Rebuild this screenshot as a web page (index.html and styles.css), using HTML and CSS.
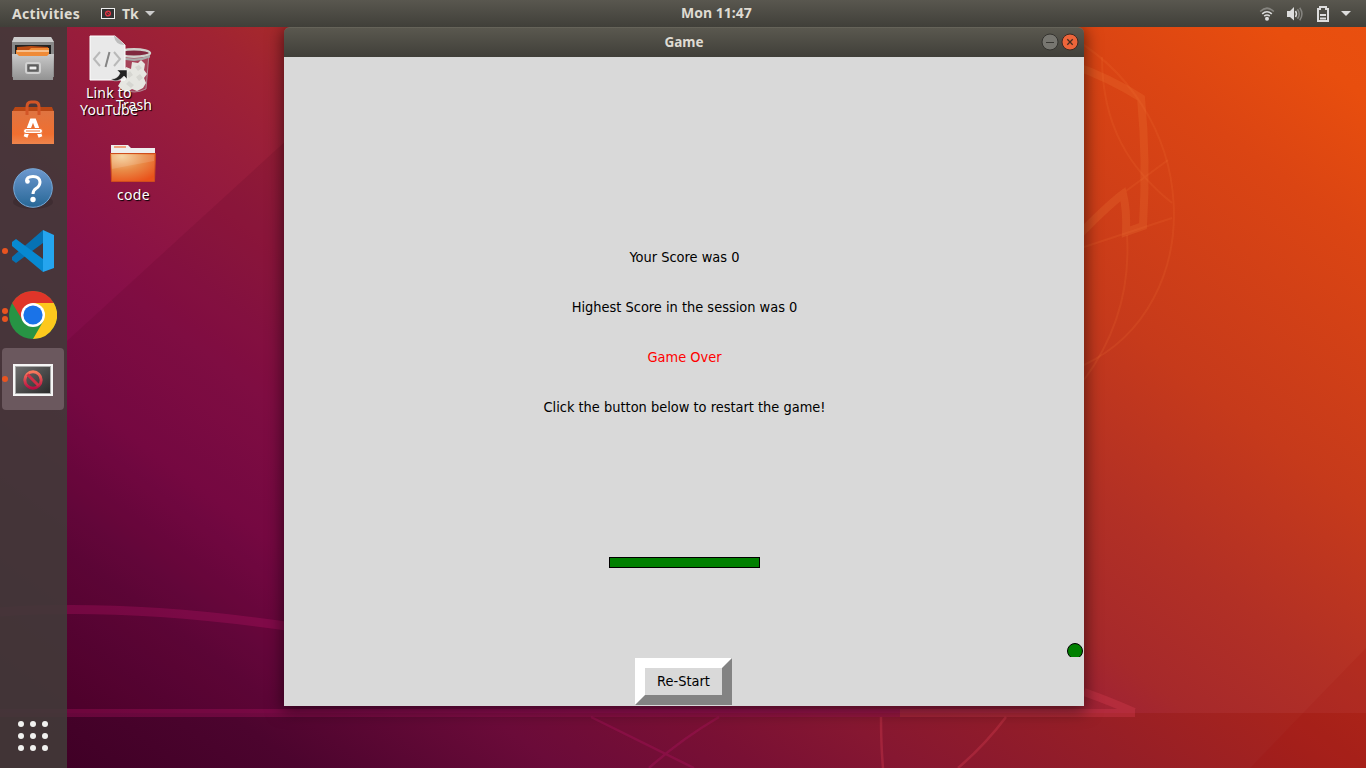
FILE: index.html
```html
<!DOCTYPE html>
<html lang="en">
<head>
<meta charset="utf-8">
<title>Game</title>
<link rel="stylesheet" href="styles.css">
</head>
<body>
<div class="screen">
  <svg class="wallpaper" viewBox="0 0 1366 768" aria-hidden="true">
    <defs>
      <linearGradient id="sky" gradientUnits="userSpaceOnUse" x1="-344" y1="459" x2="492" y2="-656">
        <stop offset="0" stop-color="#480029"/>
        <stop offset=".126" stop-color="#5f063a"/>
        <stop offset=".217" stop-color="#7b0a47"/>
        <stop offset=".298" stop-color="#870f48"/>
        <stop offset=".425" stop-color="#981d3b"/>
        <stop offset=".481" stop-color="#a02333"/>
        <stop offset=".515" stop-color="#a6292b"/>
        <stop offset=".598" stop-color="#b23025"/>
        <stop offset=".707" stop-color="#c63a1b"/>
        <stop offset=".862" stop-color="#db4513"/>
        <stop offset=".943" stop-color="#e84e0e"/>
        <stop offset="1" stop-color="#e95010"/>
      </linearGradient>
      <linearGradient id="floor" gradientUnits="userSpaceOnUse" x1="-344" y1="459" x2="492" y2="-656">
        <stop offset="0" stop-color="#400026"/>
        <stop offset=".1" stop-color="#4c042e"/>
        <stop offset=".212" stop-color="#6b0b39"/>
        <stop offset=".296" stop-color="#791034"/>
        <stop offset=".362" stop-color="#861731"/>
        <stop offset=".458" stop-color="#951e27"/>
        <stop offset=".559" stop-color="#a8241c"/>
        <stop offset=".6" stop-color="#ae281b"/>
      </linearGradient>
    </defs>
    <rect width="1366" height="768" fill="url(#sky)"/>
    <path d="M67 341L300 128V713H67z" fill="#500020" opacity=".13"/>
    <path d="M0 713H1366V768H0z" fill="url(#floor)"/>
    <path d="M1366 648V768H1250z" fill="#a00000" opacity=".1"/>
    <g fill="none" stroke="#b81468" stroke-opacity=".3">
      <path d="M0 612Q130 603 300 628" stroke-width="9"/>
      <path d="M0 713H900" stroke-width="8"/>
      <path d="M591 717L694 768M719 717Q680 740 649 768" stroke-width="2.5"/>
    </g>
    <g fill="none" stroke="#d83c50" stroke-opacity=".35">
      <path d="M900 713H1135M1084 692Q1112 702 1134 712" stroke-width="8"/>
      <path d="M881 717Q881 745 883 768M1006 717Q985 745 958 768" stroke-width="2.5"/>
    </g>
    <g fill="none" stroke="#f07838" stroke-opacity=".24">
      <path d="M1070 64Q1110 78 1141 98Q1147 160 1143 226L1126 232Q1127 210 1123 194Q1106 207 1075 239" stroke-width="8"/>
    </g>
    <g fill="none" stroke="#f07838" stroke-opacity=".16" stroke-width="2">
      <path d="M1060 31C1205 105 1210 305 1084 365"/>
      <path d="M1102 57C1102 126 1130 169 1172 203M1084 247L1172 218M1126 191L1168 160M1127 235Q1132 315 1084 380"/>
    </g>
  </svg>

  <header class="topbar">
    <div class="menu">
      <span class="activities">Activities</span>
      <svg class="app-icon" viewBox="0 0 14 11"><rect x=".5" y=".5" width="13" height="10" fill="#333" stroke="#eee"/><circle cx="7" cy="5.5" r="2.4" fill="none" stroke="#e73545" stroke-width="1.3"/><path d="M5.6 4l3 3" stroke="#e73545"/></svg>
      <span class="app-name">Tk</span>
      <svg class="arrow" viewBox="0 0 10 5"><path d="M0 0h10L5 5z" fill="#ccc"/></svg>
    </div>
    <div class="clock">Mon 11:47</div>
    <div class="tray">
      <svg class="wifi" width="16" height="14" viewBox="0 0 16 14" fill="none"><path d="M1.200 4.500Q8-2 14.800 4.500" stroke="#85847f" stroke-width="1.700"/><path d="M3.200 6.900Q8 2.600 12.800 6.900M5.200 9.200Q8 6.800 10.800 9.200" stroke="#ddd" stroke-width="1.600"/><circle cx="8" cy="11.800" r="2" fill="#ddd"/></svg>
      <svg class="volume" width="16" height="14" viewBox="0 0 16 14" fill="none"><path d="M0 4h3l4-4v13.500L3 10H0z" fill="#ddd"/><path d="M8.500 4q2 3 0 6" stroke="#ddd" stroke-width="1.500"/><path d="M10.500 2.200q3.500 4.800 0 9.600M12.700.8q4.500 6.200 0 12.400" stroke="#85847f" stroke-width="1.500"/></svg>
      <svg width="12" height="16" viewBox="0 0 12 16"><path d="M3 1h6v2h2v12H1V3h2z" fill="none" stroke="#ddd" stroke-width="2"/><path d="M3 8h6v2H3zM3 11.500h6v2H3z" fill="#ddd"/></svg>
      <svg width="10" height="5" viewBox="0 0 10 5"><path d="M0 0h10L5 5z" fill="#ddd"/></svg>
    </div>
  </header>

  <div class="workspace">
    <nav class="dock">
      <div class="tile">
        <svg width="44" height="46" viewBox="0 0 44 46">
          <defs><linearGradient id="metal" x2="0" y2="1"><stop stop-color="#c9c9c9"/><stop offset="1" stop-color="#929292"/></linearGradient></defs>
          <path d="M3 1h37l3 5v35H1V6z" fill="#888"/><path d="M3 1h37l3 5H1z" fill="#ccc"/><path d="M4 9h36v12H4z" fill="#222"/><path d="M6 11l14-1 17 1v8H6z" fill="#b94b13"/><path d="M5 14h13l2-2h18v8H5z" fill="#ef8a36"/><path d="M6 15h32" stroke="#fff2df"/><path d="M1 18h5l2 2h28l2-2h5l-1 26H2z" fill="url(#metal)"/><rect x="15" y="27" width="14" height="10" rx="2" fill="#777" stroke="#d1d1d1" stroke-width="2"/><rect x="18" y="30" width="8" height="4" fill="#eee" stroke="#444"/>
        </svg>
      </div>
      <div class="tile">
        <svg width="44" height="46" viewBox="0 0 44 46">
          <defs><linearGradient id="bag" x2="0" y2="1"><stop stop-color="#df7441"/><stop offset=".7" stop-color="#f06f30"/><stop offset="1" stop-color="#ee854d"/></linearGradient></defs>
          <path d="M4 7h37l2 5H1z" fill="#b94714"/><path d="M1 11h42v33H1z" fill="url(#bag)"/><path d="M16 15V7q0-5 4-5h4q4 0 4 5v8" fill="none" stroke="#d35526" stroke-width="3"/><path d="M14.500 37L20.700 20.500h2.600L29.500 37" fill="none" stroke="#fff" stroke-width="4"/><rect x="12.500" y="28.500" width="19" height="5" rx="2.500" fill="#fff" stroke="#ee7235"/><path d="M15 31h14" stroke="#ee7235"/>
        </svg>
      </div>
      <div class="tile nudge">
        <svg width="44" height="46" viewBox="0 0 44 46">
          <defs><linearGradient id="blue" x2="0" y2="1"><stop stop-color="#6d98cf"/><stop offset="1" stop-color="#276796"/></linearGradient></defs>
          <ellipse cx="22" cy="37" rx="20" ry="7" fill="#2d2026" opacity=".35"/><circle cx="22" cy="23" r="19.300" fill="url(#blue)" stroke="#78a9d7"/><path d="M15.500 16q0-4.500 6.500-4.500t7 5.500q0 4-4 6.500-3 2-3 5.500" fill="none" stroke="#fff" stroke-width="3"/><circle cx="16.500" cy="16.500" r="2.300" fill="#fff"/><circle cx="22" cy="34.500" r="2.700" fill="#fff"/>
        </svg>
      </div>
      <div class="tile">
        <i class="dot"></i>
        <svg width="44" height="46" viewBox="0 0 44 46"><path d="M32 2L1 29v3l4 3 27-20z" fill="#0672b4"/><path d="M1 14l4-3 27 20v13L1 18z" fill="#0789d1"/><path d="M32 2l11 5v33l-11 4z" fill="#25a5ef"/></svg>
      </div>
      <div class="tile">
        <i class="dot upper"></i><i class="dot lower"></i>
        <svg width="48" height="48" viewBox="0 0 48 48"><circle cx="24" cy="24" r="24" fill="#279444"/><path d="M3.200 12A24 24 0 0 1 44.800 12L34 29 14 30z" fill="#df3529"/><path d="M24 12h20.800A24 24 0 0 1 24 48l10.400-18z" fill="#fdc81d"/><circle cx="24" cy="24" r="12" fill="#fff"/><circle cx="24" cy="24" r="9.600" fill="#1a73e8"/></svg>
      </div>
      <div class="tile active nudge">
        <i class="dot"></i>
        <svg width="40" height="32" viewBox="0 0 40 32">
          <defs><linearGradient id="glass" x2="1" y2="1"><stop stop-color="#727272"/><stop offset="1" stop-color="#262626"/></linearGradient><linearGradient id="stop" x2="0" y2="1"><stop stop-color="#f87a5c"/><stop offset="1" stop-color="#b80e42"/></linearGradient></defs>
          <rect x="1" y="1" width="38" height="30" fill="url(#glass)" stroke="#f5f5f5" stroke-width="2"/><rect x="2.500" y="2.500" width="35" height="27" fill="none" stroke="#aaa"/><circle cx="20" cy="16" r="8.200" fill="none" stroke="url(#stop)" stroke-width="3"/><path d="M14.500 10.500l11 11" stroke="#d12e45" stroke-width="3"/>
        </svg>
      </div>
      <svg class="apps" width="30" height="30" viewBox="0 0 30 30" fill="#f1f1ef"><circle cx="3" cy="3" r="3"/><circle cx="15" cy="3" r="3"/><circle cx="27" cy="3" r="3"/><circle cx="3" cy="15" r="3"/><circle cx="15" cy="15" r="3"/><circle cx="27" cy="15" r="3"/><circle cx="3" cy="27" r="3"/><circle cx="15" cy="27" r="3"/><circle cx="27" cy="27" r="3"/></svg>
    </nav>

    <div class="desktop-item trash">
      <svg width="38" height="48" viewBox="0 0 38 48"><path d="M5 7l3 35q11 6 23 0l3-35z" fill="#ddd" fill-opacity=".2" stroke="#bbb" stroke-opacity=".65"/><path d="M8 26l3-6 5 2 1-7 6 1 3-3 4 4-1 6 3 4-3 4 2 5-3 5-6 3-5-2-5 3-5-2-4-4 3-5-1-4z" fill="#e6e6e1"/><path d="M11 27l4-3 3 4-4 3M20 20l4-2 3 3-4 3M21 30l4-3 3 4-4 3M11 37l3-3 5 4-3 3" fill="#d6d6d1"/><ellipse cx="19" cy="6" rx="16" ry="3.800" fill="#81283f" stroke="#d0d0cb" stroke-width="2.400"/><path d="M3 8q16 7 32 0v2.500q-16 7-32 0z" fill="#aaa"/></svg>
      <span class="label trash-label">Trash</span>
    </div>
    <div class="desktop-item link">
      <svg width="42" height="48" viewBox="0 0 42 48"><path d="M1 1h25l10 9v35H1z" fill="#e9e9e9" stroke="#fff"/><path d="M25 1q1 9 11 9L26 1" fill="#bdbdbd"/><path d="M11 17l-6 7 6 7M25 17l6 7-6 7" fill="none" stroke="#b9b9b9" stroke-width="2"/><path d="M20.500 17l-4 15" stroke="#858585" stroke-width="2"/><path d="M28 35h10v9l-3-3q-7 8-13 3 7 0 9-6z" fill="#222" stroke="#eee" stroke-width=".5"/></svg>
      <span class="label link-line">Link to</span><span class="label tube-line">YouTube</span>
    </div>
    <div class="desktop-item folder">
      <svg width="46" height="38" viewBox="0 0 46 38"><defs><radialGradient id="fold" cx=".25" cy=".1" r="1"><stop stop-color="#f4cf98"/><stop offset=".5" stop-color="#e98c48"/><stop offset="1" stop-color="#ea521a"/></radialGradient></defs><path d="M1 0h17l3 3h24v8H1z" fill="#eee"/><path d="M4 2h12" stroke="#f0a17b" stroke-width="2"/><path d="M.5 8.500h45l-1 28h-43z" fill="url(#fold)" stroke="#cf4d1d"/><path d="M2 10h42v6Q22 20 2 24z" fill="#fff" opacity=".13"/></svg>
      <span class="label code-label">code</span>
    </div>

    <main class="window">
      <div class="titlebar">
        <span class="title">Game</span>
        <div class="controls">
          <svg width="18" height="18" viewBox="0 0 18 18"><circle cx="9" cy="9" r="8" fill="#777670" stroke="#34332f"/><path d="M5 9.500h8" stroke="#383733"/></svg>
          <svg width="18" height="18" viewBox="0 0 18 18"><circle cx="9" cy="9" r="8" fill="#ed653a" stroke="#3c2923"/><path d="M6.300 6.300l5.400 5.400M11.700 6.300l-5.400 5.400" stroke="#442c20" stroke-width="1.300"/></svg>
        </div>
      </div>
      <section class="game">
        <div class="messages">
          <p>Your Score was 0</p>
          <p>Highest Score in the session was 0</p>
          <p class="over">Game Over</p>
          <p>Click the button below to restart the game!</p>
        </div>
        <div class="paddle"></div>
        <svg class="ball" width="16" height="14" viewBox="0 0 16 14"><circle cx="8" cy="8" r="7.500" fill="#008000" stroke="#000"/></svg>
        <button class="restart">Re-Start</button>
      </section>
    </main>
  </div>
</div>
</body>
</html>
```
FILE: styles.css
```css
* { box-sizing: border-box; }
body { margin: 0; overflow: hidden; font-family: "Noto Sans", sans-serif; }
svg { display: block; flex: none; }
.screen { position: relative; width: 1366px; height: 768px; overflow: hidden; display: flex; flex-direction: column; }
.wallpaper { position: absolute; inset: 0; width: 1366px; height: 768px; }
.topbar { position: relative; z-index: 2; height: 27px; flex: none; display: grid; grid-template-columns: 669px auto 1fr; align-items: center; background: linear-gradient(#59574f, #403f39); color: #dfdbd2; font-size: 14px; font-weight: 700; line-height: 27px; padding: 0 15px 0 12px; }
.menu { display: flex; align-items: center; }
.activities { width: 89px; letter-spacing: .3px; white-space: nowrap; }
.app-icon { width: 14px; height: 11px; }
.app-name { margin-left: 7px; width: 23px; }
.arrow { width: 10px; height: 5px; }
.clock { padding-bottom: 1px; line-height: 26px; }
.tray { display: flex; align-items: center; justify-content: flex-end; gap: 12px; }
.wifi { margin-right: 1px; }
.volume { margin: 0 2px 0 -1px; }
.workspace { position: relative; flex: 1; display: flex; }
.dock { width: 67px; height: 741px; background: rgba(65, 58, 56, .9); display: flex; flex-direction: column; align-items: center; gap: 2px; }
.tile { position: relative; width: 62px; height: 62px; display: flex; align-items: center; justify-content: center; border-radius: 4px; margin-right: 1px; }
.tile:first-child { margin-top: 1px; }
.nudge { padding-top: 2px; }
.active { background: #6b585e; }
.dot { position: absolute; left: 0; top: 28px; width: 6px; height: 6px; border-radius: 50%; background: #e95420; }
.upper { top: 24px; }
.lower { top: 32px; }
.apps { margin: auto 1px 17px 0; }
.desktop-item { position: absolute; }
.trash { left: 115px; top: 20px; }
.link { left: 89px; top: 8px; }
.folder { left: 110px; top: 118px; }
.label { position: absolute; color: #fff; font-size: 14px; line-height: 17px; text-shadow: 1px 1px 1px #000; white-space: nowrap; }
.trash-label { left: 1px; top: 49px; }
.link-line { left: -3px; top: 49px; letter-spacing: .2px; }
.tube-line { left: -9px; top: 66px; letter-spacing: .2px; }
.code-label { left: 7px; top: 41px; letter-spacing: .3px; }
.window { position: relative; width: 800px; height: 679px; margin-left: 217px; border-radius: 6px 6px 0 0; box-shadow: 0 3px 16px 2px rgba(0, 0, 0, .5); }
.titlebar { height: 30px; display: grid; grid-template-columns: 1fr auto 1fr; align-items: center; color: #dfdbd2; background: linear-gradient(#5a584f, #403f39); border-top: 1px solid #656359; border-radius: 6px 6px 0 0; font-size: 13.5px; font-weight: 700; padding-bottom: 2px; }
.title { grid-column: 2; }
.controls { display: flex; justify-content: flex-end; gap: 2px; padding-right: 5px; }
.game { position: relative; height: 649px; display: flex; flex-direction: column; align-items: center; background: #d9d9d9; color: #000; font-family: "DejaVu Sans Condensed", "DejaVu Sans", sans-serif; font-stretch: condensed; font-size: 14.45px; }
.messages { padding: 175px 0 0 1px; }
.messages p { height: 50px; margin: 0; line-height: 50px; text-align: center; white-space: nowrap; }
.messages .over { color: #f00; }
.paddle { width: 151px; height: 11px; margin: 125px 0 0 1px; background: #008000; border: 1px solid #000; }
.ball { position: absolute; left: 783px; top: 586px; }
.restart { margin: 90px 1px 0 0; width: 97px; height: 47px; padding: 0; border-style: solid; border-width: 10px; border-color: #fff #838383 #838383 #fff; background: #d9d9d9; color: #000; font: inherit; line-height: 27px; }
```
